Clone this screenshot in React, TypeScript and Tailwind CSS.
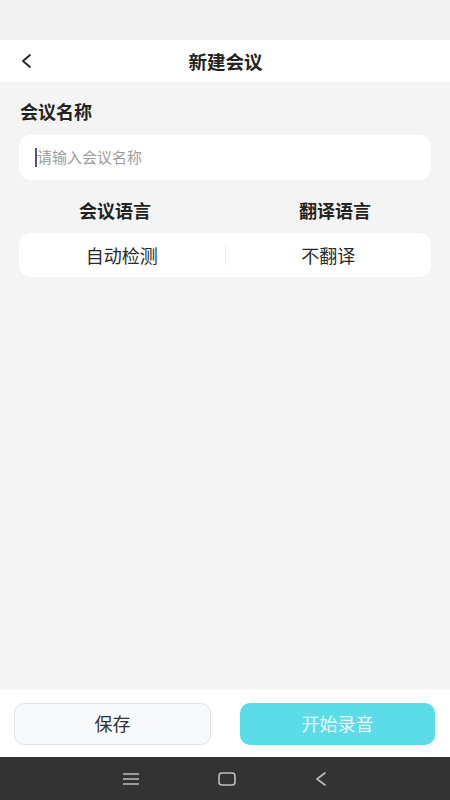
const font = { fontFamily: '"Noto Sans CJK SC", "Noto Sans", sans-serif' };

export default function App() {
  return (
    <div className="flex flex-col w-[450px] h-[800px] bg-[#f4f4f4] text-[#222]" style={font}>
      {/* status bar area */}
      <div className="h-[40px] bg-[#f2f2f2] shrink-0" />

      {/* header */}
      <div className="relative flex items-center justify-center h-[42px] bg-white shrink-0">
        <svg className="absolute left-[20px] top-[13px]" width="14" height="16" viewBox="0 0 14 16" fill="none">
          <path d="M10 2 L3 8 L10 14" stroke="#222" strokeWidth="1.8" strokeLinecap="round" strokeLinejoin="round" />
        </svg>
        <span className="text-[18.5px] font-bold leading-none pl-[1px]">新建会议</span>
      </div>

      {/* body */}
      <div className="flex-1 flex flex-col px-[19px]">
        <div className="pt-[18px] pl-[1px] text-[18px] font-bold leading-[22px]">会议名称</div>

        <div className="mt-[13px] h-[45px] rounded-[12px] bg-white flex items-center px-[16px]">
          <span className="w-[2px] h-[19px] bg-[#55507a]" />
          <span className="text-[15px] text-[#9c9c9c]">请输入会议名称</span>
        </div>

        <div className="grid grid-cols-2 mt-[17px] h-[22px] items-center text-[18px] font-bold">
          <span className="text-center pr-[14px]">会议语言</span>
          <span className="text-center pl-[14px]">翻译语言</span>
        </div>

        <div className="mt-[14px] h-[44px] rounded-[12px] bg-white flex items-center text-[18px] text-[#2a2a2a]">
          <span className="flex-1 text-center">自动检测</span>
          <span className="w-px h-[20px] bg-[#ececec]" />
          <span className="flex-1 text-center">不翻译</span>
        </div>
      </div>

      {/* bottom buttons */}
      <div className="h-[67px] bg-white flex items-center justify-between pl-[14px] pr-[15px] shrink-0">
        <button className="w-[197px] h-[42px] rounded-[10px] bg-[#f8f9fa] border border-[#e3e3e3] text-[18px] text-[#333]">
          保存
        </button>
        <button className="w-[195px] h-[42px] rounded-[10px] bg-[#5cdce8] text-[18px] text-[#e8fafb]">
          开始录音
        </button>
      </div>

      {/* system nav */}
      <div className="h-[43px] bg-[#333333] flex items-center justify-center gap-[78px] shrink-0">
        <svg width="18" height="14" viewBox="0 0 18 14" fill="none">
          <path d="M1 2h16M1 7h16M1 12h16" stroke="#bdbdbd" strokeWidth="1.6" />
        </svg>
        <svg width="18" height="14" viewBox="0 0 18 14" fill="none">
          <rect x="1" y="1" width="16" height="12" rx="3" stroke="#bdbdbd" strokeWidth="1.6" />
        </svg>
        <svg width="14" height="16" viewBox="0 0 14 16" fill="none">
          <path d="M11 2 L3 8 L11 14" stroke="#bdbdbd" strokeWidth="1.6" strokeLinecap="round" strokeLinejoin="round" />
        </svg>
      </div>
    </div>
  );
}
